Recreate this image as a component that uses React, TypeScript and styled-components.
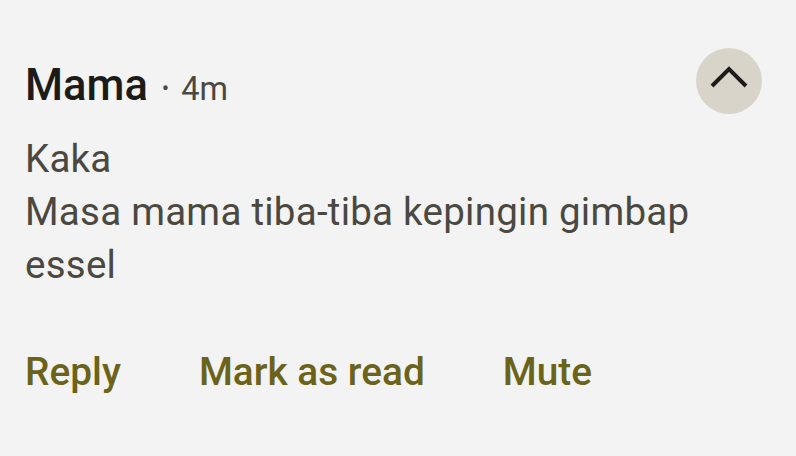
import React from "react"
import styled, { createGlobalStyle } from "styled-components"

const GlobalStyle = createGlobalStyle`
  html, body {
    margin: 0;
    padding: 0;
    background: #f3f3f3;
  }
  body {
    font-family: Roboto, "Noto Sans", sans-serif;
  }
`

const Card = styled.div`
  width: 796px;
  height: 456px;
  box-sizing: border-box;
  padding: 48px 34px 0 25px;
  background: #f3f3f3;
  display: flex;
  flex-direction: column;
`

const Header = styled.div`
  display: flex;
  align-items: flex-start;
  justify-content: space-between;
`

const TitleRow = styled.div`
  display: flex;
  align-items: baseline;
  padding-top: 12px;
`

const Sender = styled.span`
  font-size: 43.5px;
  font-weight: 500;
  color: #1c1b17;
  line-height: 52px;
`

const Meta = styled.span`
  font-size: 32.5px;
  color: #4a4840;
  margin-left: 14px;
`

const Dot = styled.span`
  margin-right: 12px;
  font-size: 22px;
  position: relative;
  top: -4px;
`

const ExpandButton = styled.button`
  width: 66px;
  height: 66px;
  border-radius: 50%;
  border: none;
  background: #d9d4ca;
  display: flex;
  align-items: center;
  justify-content: center;
  padding: 0;
`

const Body = styled.div`
  margin-top: 18px;
  font-size: 38.5px;
  line-height: 53px;
  letter-spacing: 0.25px;
  color: #4a4840;
`

const Actions = styled.div`
  display: flex;
  gap: 78px;
  margin-top: 58px;
`

const Action = styled.span`
  font-size: 38.8px;
  line-height: 46px;
  font-weight: 500;
  color: #6b6319;
`

const App = () => (
  <>
    <GlobalStyle />
    <Card>
      <Header>
        <TitleRow>
          <Sender>Mama</Sender>
          <Meta>
            <Dot>•</Dot>4m
          </Meta>
        </TitleRow>
        <ExpandButton>
          <svg width="40" height="40" viewBox="0 0 40 40">
            <path d="M3 25 L20 8 L37 25" fill="none" stroke="#1c1b17" strokeWidth="4" />
          </svg>
        </ExpandButton>
      </Header>
      <Body>
        Kaka
        <br />
        Masa mama tiba-tiba kepingin gimbap essel
      </Body>
      <Actions>
        <Action>Reply</Action>
        <Action>Mark as read</Action>
        <Action>Mute</Action>
      </Actions>
    </Card>
  </>
)

export default App
